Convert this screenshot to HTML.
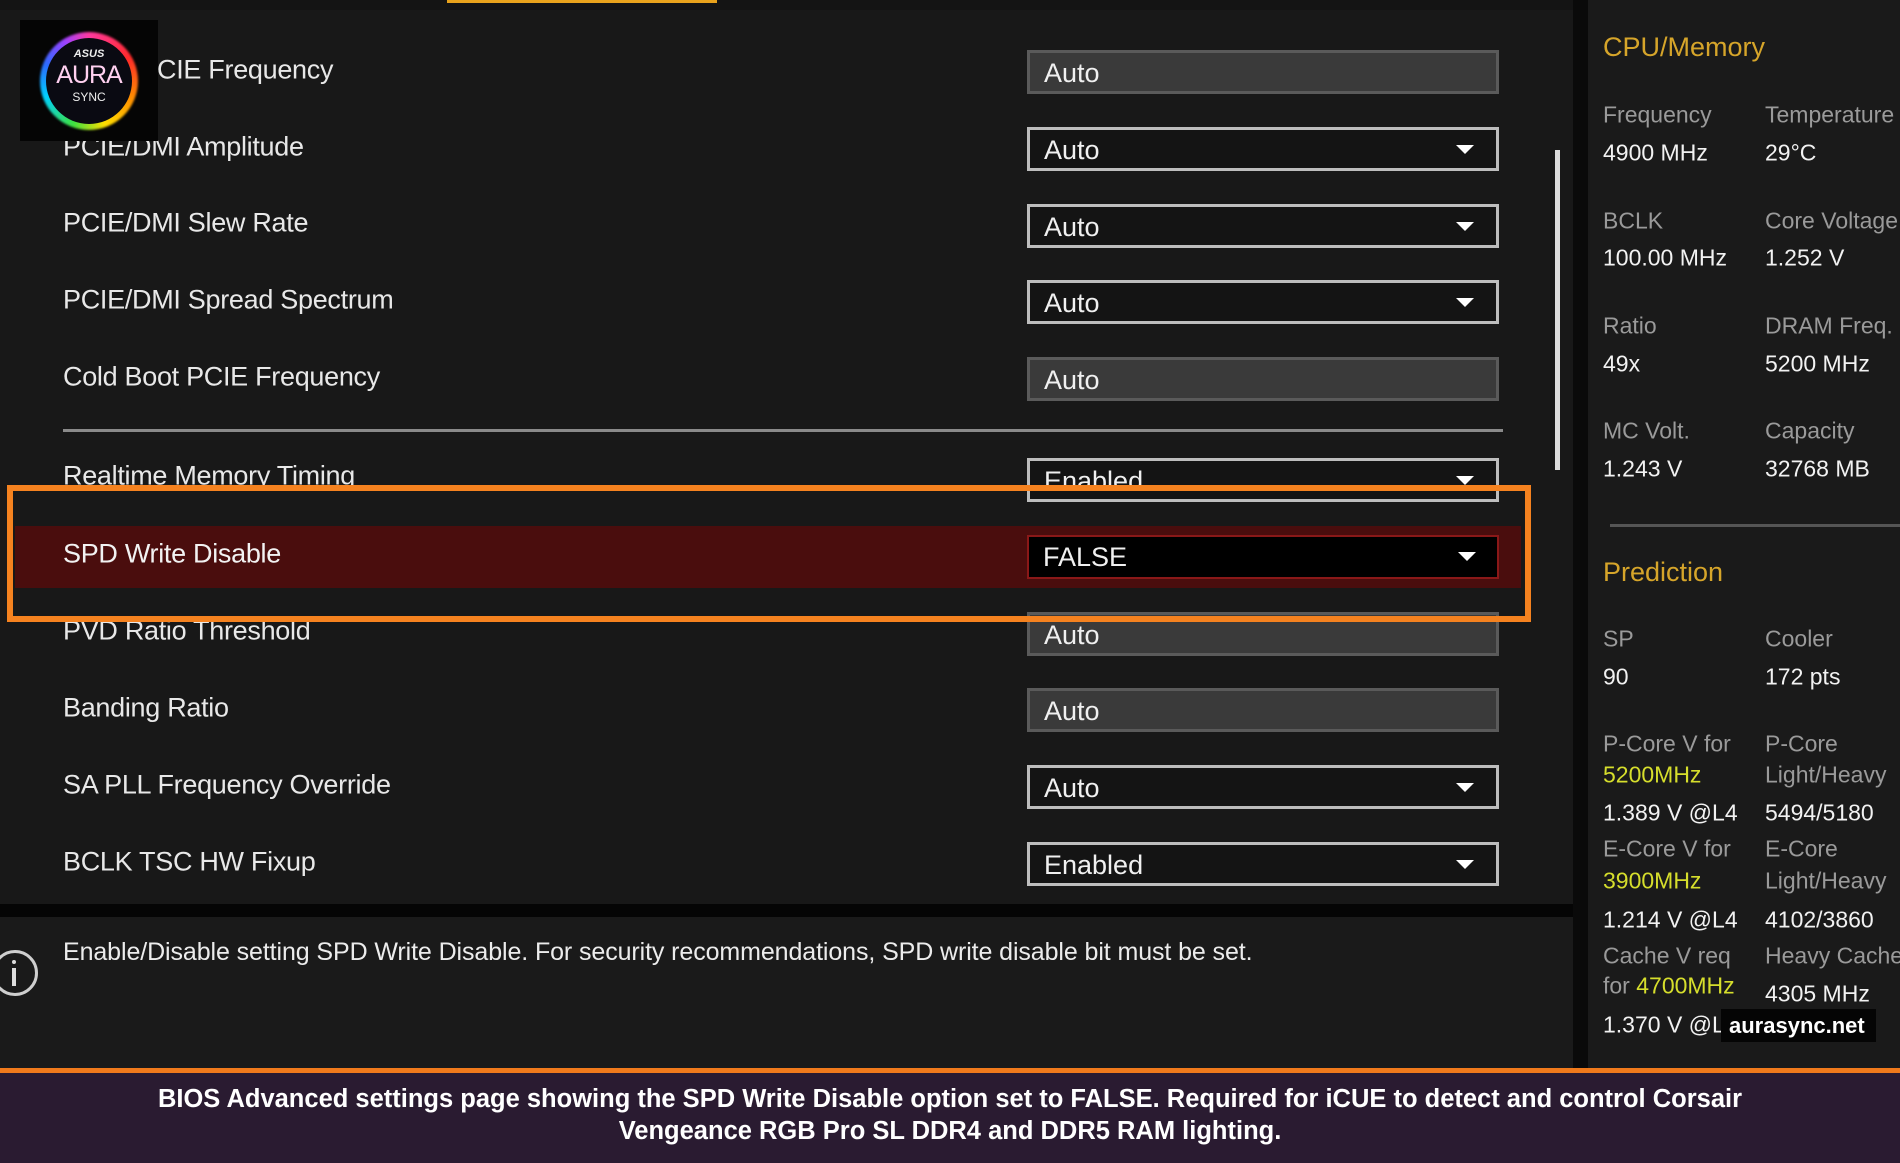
<!DOCTYPE html>
<html><head><meta charset="utf-8"><style>
*{margin:0;padding:0;box-sizing:border-box}
body{width:1900px;height:1163px;background:#181818;position:relative;overflow:hidden;font-family:"Liberation Sans","DejaVu Sans",sans-serif;color:#e6e6e6}
.a{position:absolute;white-space:nowrap}
.lbl{position:absolute;left:63px;font-size:27px;color:#e8e8e8;line-height:1;transform:translateY(-50%);white-space:nowrap;letter-spacing:-0.3px}
.box{position:absolute;left:1027px;width:472px;height:44px;transform:translateY(-50%);font-size:27px;line-height:40px;padding-left:14px;color:#f0f0f0}
.g{background:#3a3a3a;border:3px solid #5a5a5a}
.d{background:#141414;border:3px solid #bdbdbd}
.d::after{content:"";position:absolute;right:22px;top:15px;border-left:9px solid transparent;border-right:9px solid transparent;border-top:9px solid #fff}
.rl{position:absolute;font-size:23px;color:#9a9a9a;line-height:1;transform:translateY(-50%);white-space:nowrap}
.rv{position:absolute;font-size:23px;color:#f2f2f2;line-height:1;transform:translateY(-50%);white-space:nowrap}
.y{color:#d6de2c}
</style></head><body>
<div class="a" style="left:0;top:0;width:1573px;height:10px;background:#141414"></div>
<div class="a" style="left:447px;top:0;width:270px;height:3px;background:#e8a21c"></div>

<div class="lbl" style="top:70px;left:157px">CIE Frequency</div>
<div class="lbl" style="top:147px">PCIE/DMI Amplitude</div>
<div class="lbl" style="top:223px">PCIE/DMI Slew Rate</div>
<div class="lbl" style="top:300px">PCIE/DMI Spread Spectrum</div>
<div class="lbl" style="top:377px">Cold Boot PCIE Frequency</div>

<div class="box g" style="top:72px">Auto</div>
<div class="box d" style="top:149px">Auto</div>
<div class="box d" style="top:226px">Auto</div>
<div class="box d" style="top:302px">Auto</div>
<div class="box g" style="top:379px">Auto</div>

<div class="a" style="left:63px;top:429px;width:1440px;height:3px;background:#8a8a8a"></div>

<div class="lbl" style="top:476px">Realtime Memory Timing</div>
<div class="box d" style="top:480px">Enabled</div>

<div class="a" style="left:15px;top:526px;width:1506px;height:62px;background:#4a0d0d"></div>
<div class="lbl" style="top:554px;color:#f2f2f2">SPD Write Disable</div>
<div class="box" style="top:557px;background:#000;border:2px solid #8a1818">FALSE</div>
<div class="a" style="left:1458px;top:552px;border-left:9px solid transparent;border-right:9px solid transparent;border-top:9px solid #fff"></div>

<div class="lbl" style="top:631px">PVD Ratio Threshold</div>
<div class="box g" style="top:634px">Auto</div>
<div class="lbl" style="top:708px">Banding Ratio</div>
<div class="box g" style="top:710px">Auto</div>
<div class="lbl" style="top:785px">SA PLL Frequency Override</div>
<div class="box d" style="top:787px">Auto</div>
<div class="lbl" style="top:862px">BCLK TSC HW Fixup</div>
<div class="box d" style="top:864px">Enabled</div>

<div class="a" style="left:7px;top:485px;width:1524px;height:137px;border:6px solid #f5821f"></div>

<div class="a" style="left:1555px;top:150px;width:5px;height:320px;background:#dcdcdc"></div>

<div class="a" style="left:0;top:904px;width:1573px;height:13px;background:#050505"></div>
<div class="a" style="left:0;top:917px;width:1573px;height:151px;background:#1a1a1a"></div>
<div class="a" style="left:-8px;top:950px;width:46px;height:46px;border:3px solid #cfcfcf;border-radius:50%"></div>
<div class="a" style="left:12px;top:960px;width:4px;height:4px;background:#ddd;border-radius:50%"></div>
<div class="a" style="left:12px;top:968px;width:4px;height:18px;background:#ddd"></div>
<div class="a" style="left:63px;top:938px;font-size:25px;color:#ececec;letter-spacing:-0.1px">Enable/Disable setting SPD Write Disable. For security recommendations, SPD write disable bit must be set.</div>

<div class="a" style="left:1573px;top:0;width:15px;height:1068px;background:#0a0a0a"></div>
<div class="a" style="left:1588px;top:0;width:312px;height:1068px;background:#1a1a1a"></div>
<div class="a" style="left:1603px;top:32px;font-size:27px;color:#d6a52a">CPU/Memory</div>
<div class="rl" style="left:1603px;top:115px">Frequency</div><div class="rl" style="left:1765px;top:115px">Temperature</div>
<div class="rv" style="left:1603px;top:153px">4900 MHz</div><div class="rv" style="left:1765px;top:153px">29°C</div>
<div class="rl" style="left:1603px;top:221px">BCLK</div><div class="rl" style="left:1765px;top:221px">Core Voltage</div>
<div class="rv" style="left:1603px;top:258px">100.00 MHz</div><div class="rv" style="left:1765px;top:258px">1.252 V</div>
<div class="rl" style="left:1603px;top:326px">Ratio</div><div class="rl" style="left:1765px;top:326px">DRAM Freq.</div>
<div class="rv" style="left:1603px;top:364px">49x</div><div class="rv" style="left:1765px;top:364px">5200 MHz</div>
<div class="rl" style="left:1603px;top:431px">MC Volt.</div><div class="rl" style="left:1765px;top:431px">Capacity</div>
<div class="rv" style="left:1603px;top:469px">1.243 V</div><div class="rv" style="left:1765px;top:469px">32768 MB</div>
<div class="a" style="left:1610px;top:524px;width:290px;height:3px;background:#555"></div>
<div class="a" style="left:1603px;top:557px;font-size:27px;color:#d6a52a">Prediction</div>
<div class="rl" style="left:1603px;top:639px">SP</div><div class="rl" style="left:1765px;top:639px">Cooler</div>
<div class="rv" style="left:1603px;top:677px">90</div><div class="rv" style="left:1765px;top:677px">172 pts</div>
<div class="rl" style="left:1603px;top:744px">P-Core V for</div><div class="rl" style="left:1765px;top:744px">P-Core</div>
<div class="rl y" style="left:1603px;top:775px">5200MHz</div><div class="rl" style="left:1765px;top:775px">Light/Heavy</div>
<div class="rv" style="left:1603px;top:813px">1.389 V @L4</div><div class="rv" style="left:1765px;top:813px">5494/5180</div>
<div class="rl" style="left:1603px;top:849px">E-Core V for</div><div class="rl" style="left:1765px;top:849px">E-Core</div>
<div class="rl y" style="left:1603px;top:881px">3900MHz</div><div class="rl" style="left:1765px;top:881px">Light/Heavy</div>
<div class="rv" style="left:1603px;top:920px">1.214 V @L4</div><div class="rv" style="left:1765px;top:920px">4102/3860</div>
<div class="rl" style="left:1603px;top:956px">Cache V req</div><div class="rl" style="left:1765px;top:956px">Heavy Cache</div>
<div class="rl" style="left:1603px;top:986px">for <span class="y">4700MHz</span></div><div class="rv" style="left:1765px;top:994px">4305 MHz</div>
<div class="rv" style="left:1603px;top:1025px">1.370 V @L4</div>
<div class="a" style="left:1721px;top:1009px;width:155px;height:33px;background:#050505;color:#fff;font-weight:bold;font-size:22px;line-height:33px;padding-left:8px">aurasync.net</div>

<div class="a" style="left:20px;top:20px;width:138px;height:121px;background:#050505;overflow:hidden">
 <div class="a" style="left:20px;top:12px;width:98px;height:98px;border-radius:50%;background:conic-gradient(#ff3aa0,#ff2a2a 60deg,#ff8a00 110deg,#ffe000 160deg,#3de040 200deg,#00d0ff 250deg,#2a6cff 290deg,#a040ff 330deg,#ff3aa0);filter:blur(1px)"></div>
 <div class="a" style="left:26px;top:18px;width:86px;height:86px;border-radius:50%;background:#0a0a12"></div>
 <div class="a" style="left:0;top:28px;width:138px;text-align:center;font-size:11px;font-weight:bold;color:#eee;font-style:italic">ASUS</div>
 <div class="a" style="left:0;top:41px;width:138px;text-align:center;font-size:25px;color:#ffd0f0;letter-spacing:-1px">AURA</div>
 <div class="a" style="left:0;top:70px;width:138px;text-align:center;font-size:12px;color:#eee">SYNC</div>
</div>

<div class="a" style="left:0;top:1068px;width:1900px;height:5px;background:#f07a1c"></div>
<div class="a" style="left:0;top:1073px;width:1900px;height:90px;background:#2a1b31"></div>
<div class="a" style="left:0;top:1083px;width:1900px;text-align:center;font-size:25.5px;font-weight:bold;color:#fff;line-height:32px;white-space:normal">BIOS Advanced settings page showing the SPD Write Disable option set to FALSE. Required for iCUE to detect and control Corsair<br>Vengeance RGB Pro SL DDR4 and DDR5 RAM lighting.</div>
</body></html>
